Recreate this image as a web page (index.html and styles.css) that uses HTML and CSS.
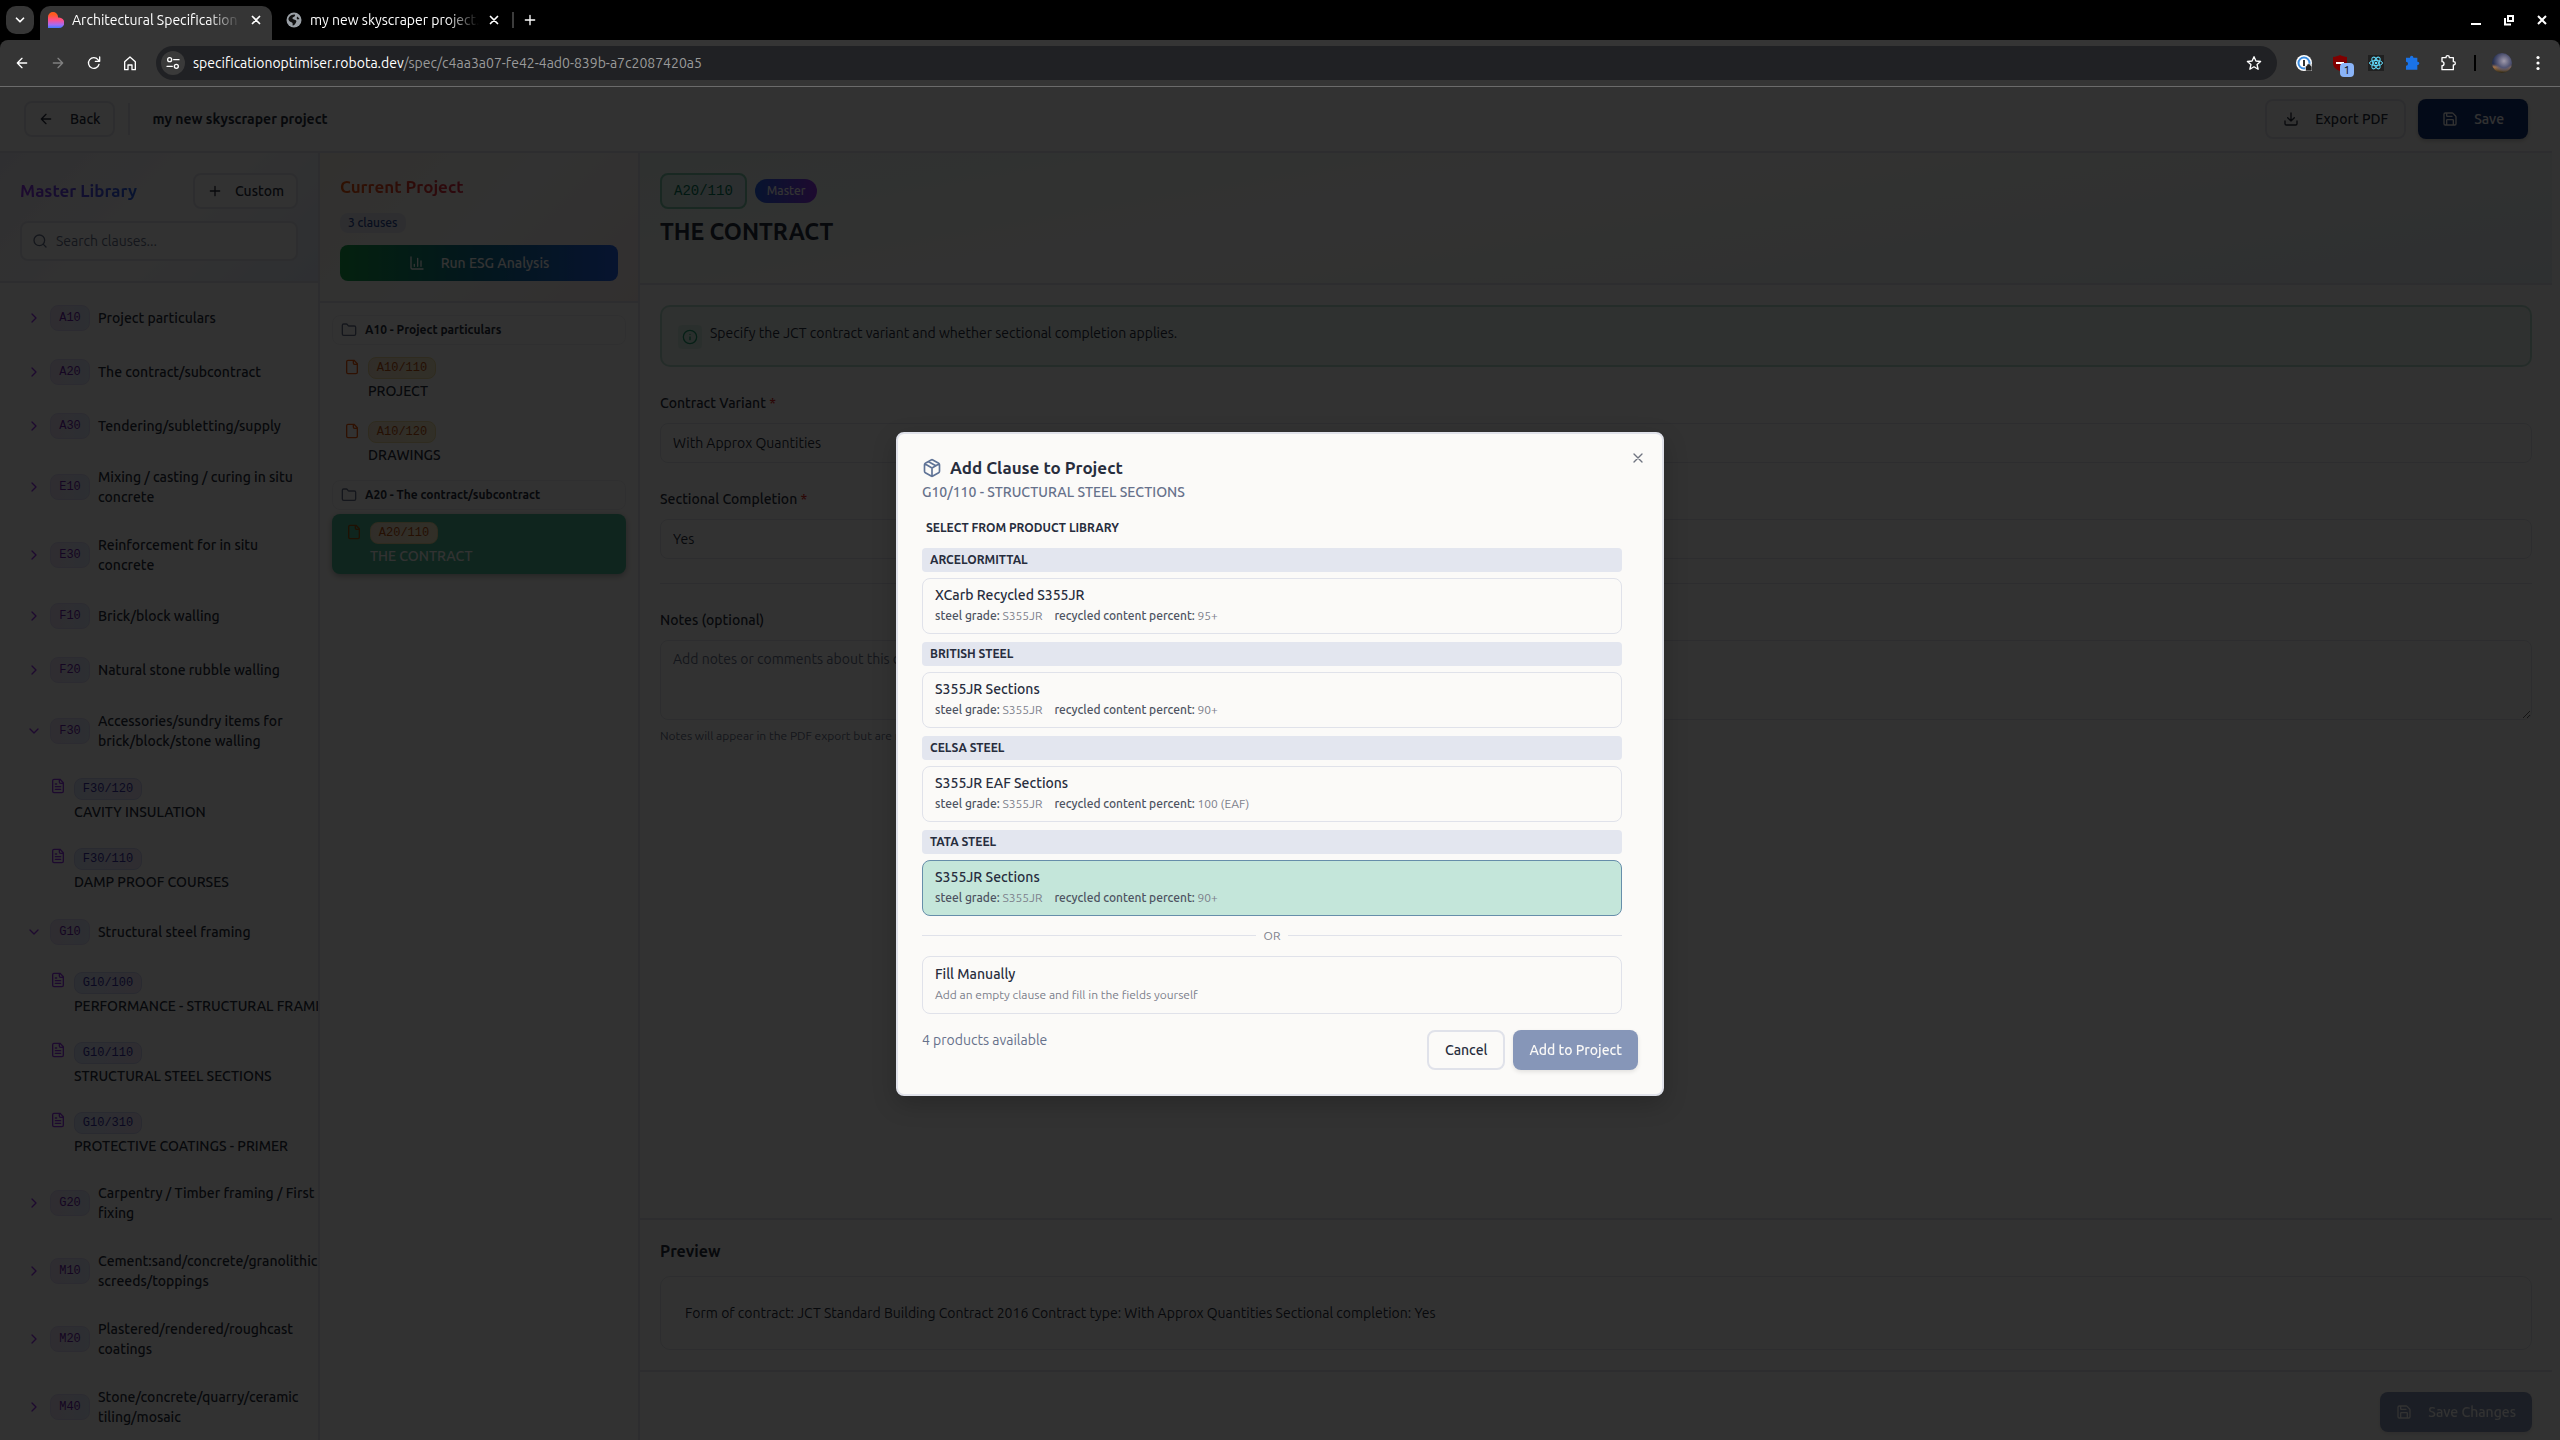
FILE: index.html
```
<!DOCTYPE html>
<html lang="en">
<head>
  <meta charset="UTF-8">
  <meta name="viewport" content="width=device-width, initial-scale=1.0">
  <title>Architectural Specification Optimiser</title>
  <link rel="stylesheet" href="styles.css">
</head>
<body>
  <!-- Shared icons -->
  <svg class="sprite" aria-hidden="true">
    <symbol id="i-x" viewBox="0 0 24 24"><path d="M18 6 6 18M6 6l12 12"/></symbol>
    <symbol id="i-plus" viewBox="0 0 24 24"><path d="M5 12h14M12 5v14"/></symbol>
    <symbol id="i-left" viewBox="0 0 24 24"><path d="m12 19-7-7 7-7M19 12H5"/></symbol>
    <symbol id="i-right" viewBox="0 0 24 24"><path d="m12 5 7 7-7 7M5 12h14"/></symbol>
    <symbol id="i-chev" viewBox="0 0 24 24"><path d="m9 18 6-6-6-6"/></symbol>
    <symbol id="i-down" viewBox="0 0 24 24"><path d="m6 9 6 6 6-6"/></symbol>
    <symbol id="i-search" viewBox="0 0 24 24"><circle cx="11" cy="11" r="8"/><path d="m21 21-4.3-4.3"/></symbol>
    <symbol id="i-download" viewBox="0 0 24 24"><path d="M21 15v4a2 2 0 0 1-2 2H5a2 2 0 0 1-2-2v-4M7 10l5 5 5-5M12 15V3"/></symbol>
    <symbol id="i-save" viewBox="0 0 24 24"><path d="M15.2 3a2 2 0 0 1 1.4.6l3.8 3.8a2 2 0 0 1 .6 1.4V19a2 2 0 0 1-2 2H5a2 2 0 0 1-2-2V5a2 2 0 0 1 2-2zM17 21v-7a1 1 0 0 0-1-1H8a1 1 0 0 0-1 1v7M7 3v4a1 1 0 0 0 1 1h7"/></symbol>
    <symbol id="i-chart" viewBox="0 0 24 24"><path d="M3 3v16a2 2 0 0 0 2 2h16M8 17v-3M13 17V5M18 17V9"/></symbol>
    <symbol id="i-folder" viewBox="0 0 24 24"><path d="M20 20a2 2 0 0 0 2-2V8a2 2 0 0 0-2-2h-7.9a2 2 0 0 1-1.7-.9L9.6 3.9A2 2 0 0 0 7.9 3H4a2 2 0 0 0-2 2v13a2 2 0 0 0 2 2Z"/></symbol>
    <symbol id="i-file" viewBox="0 0 24 24"><path d="M15 2H6a2 2 0 0 0-2 2v16a2 2 0 0 0 2 2h12a2 2 0 0 0 2-2V7ZM14 2v4a2 2 0 0 0 2 2h4"/></symbol>
    <symbol id="i-filetext" viewBox="0 0 24 24"><path d="M15 2H6a2 2 0 0 0-2 2v16a2 2 0 0 0 2 2h12a2 2 0 0 0 2-2V7ZM14 2v4a2 2 0 0 0 2 2h4M10 9H8M16 13H8M16 17H8"/></symbol>
    <symbol id="i-info" viewBox="0 0 24 24"><circle cx="12" cy="12" r="10"/><path d="M12 16v-4M12 8h.01"/></symbol>
    <symbol id="i-package" viewBox="0 0 24 24"><path d="M11 21.7a2 2 0 0 0 2 0l7-4a2 2 0 0 0 1-1.7V8a2 2 0 0 0-1-1.7l-7-4a2 2 0 0 0-2 0l-7 4A2 2 0 0 0 3 8v8a2 2 0 0 0 1 1.7ZM12 22V12M3.3 7l8.7 5 8.7-5M7.5 4.3l9 5.1"/></symbol>
    <symbol id="i-puzzle" viewBox="0 0 24 24"><path d="M3 4h6V3.500a2.500 2.500 0 0 1 5 0V4h6v6h.5a2.500 2.500 0 0 1 0 5H20v7H3v-6a3 3 0 0 0 0-6z"/></symbol>
  </svg>

  <header class="browser">
    <div class="tabs">
      <button class="tab-search" aria-label="Search tabs"><svg class="icon"><use href="#i-down"/></svg></button>
      <div class="tab tab-active">
        <svg class="favicon" viewBox="0 0 16 16"><defs><linearGradient id="fav" x1="0" y1="0" x2="0" y2="1"><stop offset=".15" stop-color="#ff5a1f"/><stop offset=".5" stop-color="#ff4f8b"/><stop offset=".8" stop-color="#a56bf5"/><stop offset="1" stop-color="#3f7bff"/></linearGradient></defs><path fill="url(#fav)" d="M0 5a5 5 0 0 1 5-5 5 5 0 0 1 5 5v.5h1A5 5 0 0 1 11 16H0z"/></svg>
        <span class="tab-title">Architectural Specification Optimiser</span>
        <button class="tab-close" aria-label="Close tab"><svg class="icon"><use href="#i-x"/></svg></button>
      </div>
      <div class="tab">
        <svg class="favicon" viewBox="0 0 16 16"><circle cx="8" cy="8" r="7.500" fill="#9aa0a6"/><path fill="#111" d="M8 2.500c2 0 1 2-.5 2.500S6 7 8 7.500s3 1 2 3-2 3-3 3 .500-2-1-3-3-1-3.500-3S5 2.500 8 2.500zM11.500 4.500l2 2.500-2 .5-1-1.500z"/></svg>
        <span class="tab-title">my new skyscraper project.pdf</span>
        <button class="tab-close" aria-label="Close tab"><svg class="icon"><use href="#i-x"/></svg></button>
      </div>
      <span class="tab-divider"></span>
      <button class="tab-new" aria-label="New tab"><svg class="icon"><use href="#i-plus"/></svg></button>
      <div class="window-controls">
        <button aria-label="Minimise"><svg viewBox="0 0 16 16"><path fill="#fff" d="M3 11h10v2H3z"/></svg></button>
        <button aria-label="Restore"><svg viewBox="0 0 16 16"><path fill="none" stroke="#fff" stroke-width="2" d="M7 4h5v5H7zM4 6v6.500h6"/></svg></button>
        <button aria-label="Close"><svg viewBox="0 0 16 16"><path fill="none" stroke="#fff" stroke-width="2" d="m4 4 8 8M12 4l-8 8"/></svg></button>
      </div>
    </div>
    <div class="toolbar">
      <nav class="nav-buttons">
        <button aria-label="Back"><svg class="icon"><use href="#i-left"/></svg></button>
        <button aria-label="Forward" disabled><svg class="icon"><use href="#i-right"/></svg></button>
        <button aria-label="Reload"><svg class="icon" viewBox="0 0 24 24"><path d="M19.500 14a8 8 0 1 1-1.500-7l2 2M20.500 3v6.500H14"/></svg></button>
        <button aria-label="Home"><svg class="icon" viewBox="0 0 24 24"><path d="M4 10l8-7 8 7v12h-5v-7H9v7H4z"/></svg></button>
      </nav>
      <div class="address">
        <span class="site-info"><svg class="icon" viewBox="0 0 24 24"><circle cx="7" cy="7" r="3"/><path d="M13 7h8M3 17h8"/><circle cx="17" cy="17" r="3"/></svg></span>
        <span class="url"><b>specificationoptimiser.robota.dev</b>/spec/c4aa3a07-fe42-4ad0-839b-a7c2087420a5</span>
        <button class="star" aria-label="Bookmark"><svg class="icon" viewBox="0 0 24 24"><path d="m12 2.500 2.900 6.500 7 .7-5.300 4.700 1.600 7L12 17.700l-6.200 3.700 1.600-7L2.100 9.700l7-.7z"/></svg></button>
      </div>
      <div class="extensions">
        <span class="ext"><svg viewBox="0 0 16 16"><circle cx="8" cy="8" r="8" fill="#fff"/><circle cx="8" cy="8" r="5.500" fill="#fff" stroke="#3b8de0" stroke-width="2"/><path fill="#333" d="M7 5h2v6H7z"/><path fill="#222" stroke="#fff" stroke-width=".6" d="M9.500 11v5H16v-5h-1a2.200 2.200 0 0 0-4.500 0z"/></svg></span>
        <span class="ext"><svg viewBox="0 0 16 16"><path fill="#800000" d="M8 0c2 1.200 4.500 1.800 7 2v6c0 4-3 6.500-7 8-4-1.500-7-4-7-8V2c2.500-.2 5-.8 7-2z"/><path fill="#fff" d="M4 7h8v2H4z"/></svg><span class="ext-badge">1</span></span>
        <span class="ext"><svg viewBox="0 0 16 16"><path fill="#202020" d="M0 0h16v16H0z"/><g fill="none" stroke="#61dafb"><ellipse cx="8" cy="8" rx="6.500" ry="2.600"/><ellipse cx="8" cy="8" rx="6.500" ry="2.600" transform="rotate(60 8 8)"/><ellipse cx="8" cy="8" rx="6.500" ry="2.600" transform="rotate(120 8 8)"/></g><circle cx="8" cy="8" r="1.300" fill="#61dafb"/></svg></span>
        <span class="ext"><svg class="puzzle-blue"><use href="#i-puzzle"/></svg></span>
        <span class="ext"><svg class="icon puzzle"><use href="#i-puzzle"/></svg></span>
        <span class="ext-divider"></span>
        <span class="avatar"></span>
        <button class="menu" aria-label="Menu"><svg viewBox="0 0 16 16" fill="#fff"><circle cx="8" cy="2.500" r="1.600"/><circle cx="8" cy="8" r="1.600"/><circle cx="8" cy="13.500" r="1.600"/></svg></button>
      </div>
    </div>
  </header>

  <div class="viewport">
    <div class="app">
      <header class="app-header">
        <button class="btn btn-sm"><svg class="icon"><use href="#i-left"/></svg>Back</button>
        <span class="header-divider"></span>
        <h1>my new skyscraper project</h1>
        <div class="header-actions">
          <button class="btn"><svg class="icon"><use href="#i-download"/></svg>Export PDF</button>
          <button class="btn btn-primary btn-save"><svg class="icon"><use href="#i-save"/></svg>Save</button>
        </div>
      </header>

      <div class="columns">
        <aside class="library">
          <div class="library-head">
            <div class="head-row">
              <h2 class="grad-library">Master Library</h2>
              <button class="btn btn-sm btn-custom"><svg class="icon"><use href="#i-plus"/></svg>Custom</button>
            </div>
            <div class="search">
              <svg class="icon"><use href="#i-search"/></svg>
              <input type="text" placeholder="Search clauses..." aria-label="Search clauses">
            </div>
          </div>
          <div class="sections">
            <button class="section"><svg class="icon"><use href="#i-chev"/></svg><span class="code">A10</span><span>Project particulars</span></button>
            <button class="section"><svg class="icon"><use href="#i-chev"/></svg><span class="code">A20</span><span>The contract/subcontract</span></button>
            <button class="section"><svg class="icon"><use href="#i-chev"/></svg><span class="code">A30</span><span>Tendering/subletting/supply</span></button>
            <button class="section"><svg class="icon"><use href="#i-chev"/></svg><span class="code">E10</span><span>Mixing / casting / curing in situ<br>concrete</span></button>
            <button class="section"><svg class="icon"><use href="#i-chev"/></svg><span class="code">E30</span><span>Reinforcement for in situ<br>concrete</span></button>
            <button class="section"><svg class="icon"><use href="#i-chev"/></svg><span class="code">F10</span><span>Brick/block walling</span></button>
            <button class="section"><svg class="icon"><use href="#i-chev"/></svg><span class="code">F20</span><span>Natural stone rubble walling</span></button>
            <button class="section"><svg class="icon"><use href="#i-down"/></svg><span class="code">F30</span><span>Accessories/sundry items for<br>brick/block/stone walling</span></button>
            <div class="clause"><svg class="icon"><use href="#i-filetext"/></svg><div><span class="chip chip-blue">F30/120</span><p>CAVITY INSULATION</p></div></div>
            <div class="clause"><svg class="icon"><use href="#i-filetext"/></svg><div><span class="chip chip-blue">F30/110</span><p>DAMP PROOF COURSES</p></div></div>
            <button class="section"><svg class="icon"><use href="#i-down"/></svg><span class="code">G10</span><span>Structural steel framing</span></button>
            <div class="clause"><svg class="icon"><use href="#i-filetext"/></svg><div><span class="chip chip-blue">G10/100</span><p>PERFORMANCE - STRUCTURAL FRAMING</p></div></div>
            <div class="clause"><svg class="icon"><use href="#i-filetext"/></svg><div><span class="chip chip-blue">G10/110</span><p>STRUCTURAL STEEL SECTIONS</p></div></div>
            <div class="clause"><svg class="icon"><use href="#i-filetext"/></svg><div><span class="chip chip-blue">G10/310</span><p>PROTECTIVE COATINGS - PRIMER</p></div></div>
            <button class="section"><svg class="icon"><use href="#i-chev"/></svg><span class="code">G20</span><span>Carpentry / Timber framing / First<br>fixing</span></button>
            <button class="section"><svg class="icon"><use href="#i-chev"/></svg><span class="code">M10</span><span>Cement:sand/concrete/granolithic<br>screeds/toppings</span></button>
            <button class="section"><svg class="icon"><use href="#i-chev"/></svg><span class="code">M20</span><span>Plastered/rendered/roughcast<br>coatings</span></button>
            <button class="section"><svg class="icon"><use href="#i-chev"/></svg><span class="code">M40</span><span>Stone/concrete/quarry/ceramic<br>tiling/mosaic</span></button>
          </div>
        </aside>

        <aside class="project">
          <div class="project-head">
            <h2 class="grad-project">Current Project</h2>
            <span class="count">3 clauses</span>
            <button class="btn btn-sm btn-esg"><svg class="icon"><use href="#i-chart"/></svg>Run ESG Analysis</button>
          </div>
          <div class="project-list">
            <div class="group">
              <h3><svg class="icon"><use href="#i-folder"/></svg>A10 - Project particulars</h3>
              <div class="item"><svg class="icon"><use href="#i-file"/></svg><div><span class="chip chip-amber">A10/110</span><p>PROJECT</p></div></div>
              <div class="item"><svg class="icon"><use href="#i-file"/></svg><div><span class="chip chip-amber">A10/120</span><p>DRAWINGS</p></div></div>
            </div>
            <div class="group">
              <h3><svg class="icon"><use href="#i-folder"/></svg>A20 - The contract/subcontract</h3>
              <div class="item item-active"><svg class="icon"><use href="#i-file"/></svg><div><span class="chip chip-amber">A20/110</span><p>THE CONTRACT</p></div></div>
            </div>
          </div>
        </aside>

        <main class="editor">
          <div class="editor-head">
            <div class="editor-tags"><span class="clause-code">A20/110</span><span class="pill">Master</span></div>
            <h2>THE CONTRACT</h2>
          </div>
          <form class="editor-body">
            <div class="info"><span class="info-icon"><svg class="icon"><use href="#i-info"/></svg></span><p>Specify the JCT contract variant and whether sectional completion applies.</p></div>
            <div class="field">
              <label for="variant">Contract Variant <span class="req">*</span></label>
              <select id="variant"><option>With Approx Quantities</option></select>
            </div>
            <div class="field">
              <label for="sectional">Sectional Completion <span class="req">*</span></label>
              <select id="sectional"><option>Yes</option></select>
            </div>
            <div class="field field-notes">
              <label for="notes">Notes (optional)</label>
              <textarea id="notes" placeholder="Add notes or comments about this clause..."></textarea>
              <small>Notes will appear in the PDF export but are not part of the clause text.</small>
            </div>
          </form>
          <section class="preview">
            <h3>Preview</h3>
            <p>Form of contract: JCT Standard Building Contract 2016 Contract type: With Approx Quantities Sectional completion: Yes</p>
          </section>
          <footer class="editor-foot">
            <button class="btn btn-primary" disabled><svg class="icon"><use href="#i-save"/></svg>Save Changes</button>
          </footer>
        </main>
      </div>
    </div>

    <div class="overlay">
      <div class="modal" role="dialog" aria-labelledby="modal-title">
        <button class="modal-close" aria-label="Close"><svg class="icon"><use href="#i-x"/></svg></button>
        <h2 id="modal-title"><svg class="icon"><use href="#i-package"/></svg>Add Clause to Project</h2>
        <p class="modal-sub">G10/110 - STRUCTURAL STEEL SECTIONS</p>
        <div class="products">
          <h3>SELECT FROM PRODUCT LIBRARY</h3>
          <h4>ARCELORMITTAL</h4>
          <button class="product"><strong>XCarb Recycled S355JR</strong><span class="meta"><span><b>steel grade:</b> S355JR</span><span><b>recycled content percent:</b> 95+</span></span></button>
          <h4>BRITISH STEEL</h4>
          <button class="product"><strong>S355JR Sections</strong><span class="meta"><span><b>steel grade:</b> S355JR</span><span><b>recycled content percent:</b> 90+</span></span></button>
          <h4>CELSA STEEL</h4>
          <button class="product"><strong>S355JR EAF Sections</strong><span class="meta"><span><b>steel grade:</b> S355JR</span><span><b>recycled content percent:</b> 100 (EAF)</span></span></button>
          <h4>TATA STEEL</h4>
          <button class="product product-active"><strong>S355JR Sections</strong><span class="meta"><span><b>steel grade:</b> S355JR</span><span><b>recycled content percent:</b> 90+</span></span></button>
          <div class="or">OR</div>
          <button class="product product-manual"><strong>Fill Manually</strong><span class="meta">Add an empty clause and fill in the fields yourself</span></button>
        </div>
        <div class="modal-foot">
          <p>4 products available</p>
          <button class="btn">Cancel</button>
          <button class="btn btn-primary" disabled>Add to Project</button>
        </div>
      </div>
    </div>
  </div>
</body>
</html>
```
FILE: styles.css
```
:root {
  --page: #fbfaf8;
  --line: #e0e2ea;
  --text: #272d3d;
  --muted: #66718b;
  --primary: #13347a;
}

* {
  box-sizing: border-box;
}

body {
  margin: 0;
  height: 100vh;
  display: flex;
  flex-direction: column;
  overflow: hidden;
  background: var(--page);
  color: var(--text);
  font-family: Ubuntu, Roboto, sans-serif;
  font-size: 14px;
  line-height: 20px;
}

h1, h2, h3, h4, p {
  margin: 0;
}

button, input, select, textarea {
  font: inherit;
  color: inherit;
}

button {
  padding: 0;
  border: 0;
  background: none;
}

.sprite {
  display: none;
}

.icon {
  width: 16px;
  height: 16px;
  flex: none;
  fill: none;
  stroke: currentColor;
  stroke-width: 2;
  stroke-linecap: round;
  stroke-linejoin: round;
}

/* Browser */
.browser {
  flex: none;
  background: #000;
  color: #fff;
  border-bottom: 1px solid #6b6b6b;
}

.browser button {
  display: flex;
}

.browser button:disabled {
  color: #808080;
}

.tabs {
  display: flex;
  align-items: center;
  height: 40px;
  padding: 0 10px 0 6px;
}

.tab-search {
  width: 28px;
  height: 28px;
  margin-right: 6px;
  align-items: center;
  justify-content: center;
  border-radius: 10px;
  background: #363636;
}

.tab-search .icon, .tab-close .icon {
  stroke-width: 3;
  width: 14px;
  height: 14px;
}

.tab {
  display: flex;
  align-items: center;
  align-self: flex-end;
  gap: 8px;
  width: 232px;
  height: 34px;
  padding: 0 9px 6px 8px;
}

.tab-active {
  background: #353535;
  border-radius: 10px 10px 0 0;
}

.tab + .tab {
  padding-left: 14px;
  width: 238px;
}

.favicon {
  width: 16px;
  height: 16px;
  flex: none;
}

.tab-title {
  flex: 1;
  overflow: hidden;
  white-space: nowrap;
  -webkit-mask-image: linear-gradient(90deg, #000 80%, transparent);
  mask-image: linear-gradient(90deg, #000 80%, transparent);
}

.tab-divider {
  width: 2px;
  height: 16px;
  margin: 0 8px 0 2px;
  background: #3c3c3c;
}

.window-controls {
  display: flex;
  gap: 17px;
  margin-left: auto;
}

.browser svg:not(.icon):not(.favicon) {
  width: 16px;
  height: 16px;
}

.toolbar {
  display: flex;
  align-items: center;
  height: 46px;
  padding: 6px 14px;
  background: #353535;
  border-radius: 8px 8px 0 0;
}

.nav-buttons {
  display: flex;
  gap: 20px;
  margin-right: 18px;
}

.address {
  flex: 1;
  display: flex;
  align-items: center;
  gap: 8px;
  height: 34px;
  padding: 0 15px 0 5px;
  border-radius: 17px;
  background: #202124;
}

.site-info {
  display: grid;
  place-items: center;
  width: 24px;
  height: 24px;
  border-radius: 50%;
  background: #3a3a3a;
}

.url {
  flex: 1;
  color: #9a9a9a;
}

.url b {
  font-weight: 400;
  color: #fff;
}

.extensions {
  display: flex;
  align-items: center;
  gap: 20px;
  margin-left: 19px;
}

.ext {
  position: relative;
  display: flex;
}

.ext-badge {
  position: absolute;
  left: 8px;
  top: 8px;
  width: 14px;
  border-radius: 4px;
  background: #8ab4f8;
  color: #111;
  font-size: 12px;
  line-height: 14px;
  text-align: center;
}

.puzzle-blue {
  fill: #1a73e8;
}

.ext-divider {
  width: 2px;
  height: 16px;
  margin: 0 -4px 0 -2px;
  background: #000;
}

.avatar {
  width: 20px;
  height: 20px;
  margin-right: -2px;
  border-radius: 50%;
  background: radial-gradient(ellipse at 60% 40%, #a09aab, #525574 40%, transparent 65%), linear-gradient(#26304f 55%, #a5744a 70%, #2b2714);
}

/* App */
.viewport {
  position: relative;
  flex: 1;
  min-height: 0;
}

.app {
  height: 100%;
  margin-right: 8px;
  display: flex;
  flex-direction: column;
}

.app-header {
  flex: none;
  display: flex;
  align-items: center;
  padding: 12px 24px;
  border-bottom: 2px solid var(--line);
}

.app-header h1 {
  font-size: 14px;
  font-weight: 600;
}

.header-divider {
  width: 2px;
  height: 32px;
  margin: 0 23px 0 13px;
  background: var(--line);
}

.header-actions {
  display: flex;
  gap: 12px;
  margin-left: auto;
}

.btn {
  display: inline-flex;
  align-items: center;
  justify-content: center;
  gap: 16px;
  height: 40px;
  padding: 0 16px;
  border: 2px solid var(--line);
  border-radius: 8px;
  background: var(--page);
  font-weight: 500;
}

.btn-sm {
  height: 36px;
  padding: 0 12px;
}

.btn-custom {
  gap: 12px;
}

.btn-primary {
  border: 0;
  background: var(--primary);
  color: var(--page);
  box-shadow: 0 2px 4px rgba(0, 0, 0, .2);
}

.btn-save {
  padding: 0 24px;
}

.btn-primary:disabled {
  opacity: .5;
}

.columns {
  flex: 1;
  min-height: 0;
  display: grid;
  grid-template-columns: 320px 320px 1fr;
}

.library, .project {
  overflow: hidden;
  border-right: 2px solid var(--line);
}

.library-head {
  padding: 20px;
  border-bottom: 2px solid var(--line);
  background: linear-gradient(135deg, #ebebf5, #fbfaf8 50%, #e4ebf8);
}

.head-row {
  display: flex;
  align-items: center;
  justify-content: space-between;
  margin-bottom: 12px;
}

.library h2, .project h2 {
  font-size: 17px;
  font-weight: 600;
  line-height: 28px;
  color: transparent;
  -webkit-background-clip: text;
  background-clip: text;
}

.grad-library {
  background-image: linear-gradient(90deg, #9333ea, #2563eb);
}

.grad-project {
  align-self: flex-start;
  background-image: linear-gradient(90deg, #ea580c, #db2747);
}

.search {
  display: flex;
  align-items: center;
  gap: 8px;
  height: 40px;
  padding: 0 10px;
  border: 2px solid var(--line);
  border-radius: 8px;
  background: var(--page);
  color: var(--muted);
}

.search input {
  flex: 1;
  min-width: 0;
  padding: 0;
  border: 0;
  background: none;
}

::placeholder {
  color: var(--muted);
}

.sections {
  padding: 8px 0;
}

.section {
  display: flex;
  align-items: center;
  gap: 8px;
  padding: 14px 0 14px 26px;
  font-weight: 500;
  text-align: left;
  white-space: nowrap;
}

.section .icon, .clause .icon {
  color: #9333ea;
}

.code, .chip, .clause-code {
  font-family: "Liberation Mono", monospace;
  font-size: 12px;
}

.code {
  width: 40px;
  border: 1px solid #ddd8f2;
  border-radius: 8px;
  background: linear-gradient(90deg, #ebe0f5, #dde8f8);
  color: #6b21a8;
  font-weight: 400;
  line-height: 24px;
  text-align: center;
}

.clause, .item {
  display: flex;
  gap: 8px;
  font-weight: 500;
  white-space: nowrap;
}

.clause {
  padding: 13px 0 13px 50px;
}

.chip {
  display: block;
  width: 68px;
  margin-bottom: 2px;
  border: 1px solid;
  border-radius: 8px;
  font-weight: 400;
  line-height: 20px;
  text-align: center;
}

.chip-blue {
  border-color: #ccd0f0;
  background: linear-gradient(90deg, #dbe5fa, #ebe0f5);
  color: #3730a3;
}

.chip-amber {
  border-color: #e8d79a;
  background: linear-gradient(90deg, #f3e2cc, #f5ecc4);
  color: #b8500f;
}

.project-head {
  display: flex;
  flex-direction: column;
  gap: 12px;
  padding: 20px;
  border-bottom: 2px solid var(--line);
  background: linear-gradient(135deg, #fbf3ea, #fbfaf8 50%, #fbeceb);
}

.count {
  align-self: flex-start;
  padding: 0 8px;
  border-radius: 8px;
  background: #e4e6ef;
  color: #2b4a94;
  font-size: 12px;
  font-weight: 500;
}

.btn-esg {
  border: 0;
  background: linear-gradient(90deg, #16a34a, #0f6f90 50%, #2563eb);
  color: #fff;
}

.project-list {
  display: flex;
  flex-direction: column;
  gap: 7px;
  padding: 12px;
}

.group {
  display: flex;
  flex-direction: column;
  gap: 4px;
}

.group h3 {
  display: flex;
  align-items: center;
  gap: 8px;
  height: 30px;
  padding: 0 8px;
  border: 1px solid #ececf0;
  border-radius: 8px;
  font-size: 12px;
  font-weight: 600;
}

.group h3 .icon {
  color: var(--muted);
}

.item {
  padding: 8px 12px;
}

.item .icon {
  margin-top: 2px;
  color: #ea580c;
}

.item-active {
  padding-left: 14px;
  border-radius: 8px;
  background: #4bb996;
  color: var(--page);
  box-shadow: 0 2px 6px rgba(0, 0, 0, .3);
}

.item-active .icon {
  color: #9a5410;
}

.editor {
  display: flex;
  flex-direction: column;
  min-width: 0;
}

.editor-head {
  min-height: 132px;
  padding: 20px;
  border-bottom: 2px solid var(--line);
  background: linear-gradient(170deg, #eaf5f0, #fbfaf8 40%, #f0f5f2 70%, #e6eef2);
}

.editor-head h2 {
  margin-top: 8px;
  font-size: 23px;
  font-weight: 700;
  line-height: 30px;
}

.editor-tags {
  display: flex;
  align-items: center;
  gap: 8px;
}

.clause-code {
  padding: 0 12px;
  border: 2px solid #7cc9a8;
  border-radius: 8px;
  background: linear-gradient(90deg, #d4efe3, #dce9f2);
  color: #047857;
  font-size: 14px;
  line-height: 32px;
}

.pill {
  padding: 0 12px;
  border-radius: 12px;
  background: linear-gradient(90deg, #2563eb, #9333ea);
  color: #fff;
  font-size: 12px;
  font-weight: 500;
  line-height: 24px;
}

.editor-body {
  flex: 1;
  padding: 20px;
}

.info {
  display: flex;
  gap: 8px;
  height: 62px;
  padding: 16px;
  border: 2px solid #b5dccd;
  border-radius: 10px;
  background: #ebf3ef;
}

.info-icon {
  display: grid;
  place-items: center;
  width: 24px;
  height: 24px;
  margin-top: 2px;
  border-radius: 4px;
  background: #d3ece1;
  color: #1f9d6f;
}

.field {
  display: flex;
  flex-direction: column;
  gap: 10px;
  padding-top: 26px;
}

.field label {
  font-weight: 500;
}

.req {
  color: #dc2626;
}

select, textarea {
  width: 100%;
  height: 40px;
  padding: 0 12px;
  border: 1px solid var(--line);
  border-radius: 8px;
  background: var(--page);
  appearance: none;
}

.field-notes {
  margin-top: 24px;
  border-top: 1px solid var(--line);
}

textarea {
  height: 80px;
  padding: 8px 12px;
}

small {
  margin-top: -4px;
  color: var(--muted);
  font-size: 12px;
}

.preview {
  padding: 20px;
  border-top: 2px solid var(--line);
}

.preview h3 {
  margin-bottom: 14px;
  font-size: 16px;
  font-weight: 600;
  line-height: 22px;
}

.preview p {
  padding: 26px 24px;
  border: 1px solid var(--line);
  border-radius: 10px;
}

.editor-foot {
  display: flex;
  justify-content: flex-end;
  padding: 20px 20px 8px;
  border-top: 2px solid var(--line);
}

/* Dialog */
.overlay {
  position: absolute;
  inset: 0;
  display: grid;
  place-items: center;
  background: rgba(0, 0, 0, .8);
}

.modal {
  position: relative;
  width: 100%;
  max-width: 768px;
  padding: 24px;
  border: 2px solid var(--line);
  border-radius: 8px;
  background: var(--page);
  box-shadow: 0 8px 24px rgba(0, 0, 0, .2);
}

.modal-close {
  position: absolute;
  top: 16px;
  right: 16px;
  display: flex;
  color: #6f7480;
}

.modal > h2 {
  display: flex;
  align-items: center;
  gap: 8px;
  font-size: 17px;
  font-weight: 600;
}

.modal > h2 .icon {
  width: 20px;
  height: 20px;
  color: #5f7396;
}

.modal-sub {
  margin-top: 4px;
  color: var(--muted);
  font-weight: 500;
}

.products {
  display: flex;
  flex-direction: column;
  margin-top: 16px;
  padding-right: 16px;
}

.products h3, .products h4 {
  font-size: 12px;
  font-weight: 600;
}

.products h3 {
  padding: 0 4px;
  margin-bottom: 10px;
}

.products h4 {
  margin-bottom: 6px;
  padding: 0 8px;
  border-radius: 4px;
  background: #e3e6ef;
  line-height: 24px;
}

.product {
  height: 56px;
  margin-bottom: 8px;
  padding: 0 12px;
  border: 1px solid var(--line);
  border-radius: 8px;
  text-align: left;
}

.product strong {
  display: block;
  font-weight: 500;
}

.product-active {
  border-color: #668eaa;
  background: #c4e6da;
}

.meta {
  display: flex;
  gap: 12px;
  margin-top: 1px;
  color: #7c808b;
  font-size: 12px;
}

.meta b {
  color: #4c5260;
  font-weight: 500;
}

.or {
  display: flex;
  align-items: center;
  gap: 8px;
  margin: 2px 0 10px;
  color: #7c808b;
  font-size: 12px;
}

.or::before, .or::after {
  content: "";
  flex: 1;
  border-top: 1px solid var(--line);
}

.product-manual {
  height: 58px;
}

.modal-foot {
  display: flex;
  gap: 8px;
  margin-top: 8px;
}

.modal-foot p {
  margin-right: auto;
  color: var(--muted);
}
```
